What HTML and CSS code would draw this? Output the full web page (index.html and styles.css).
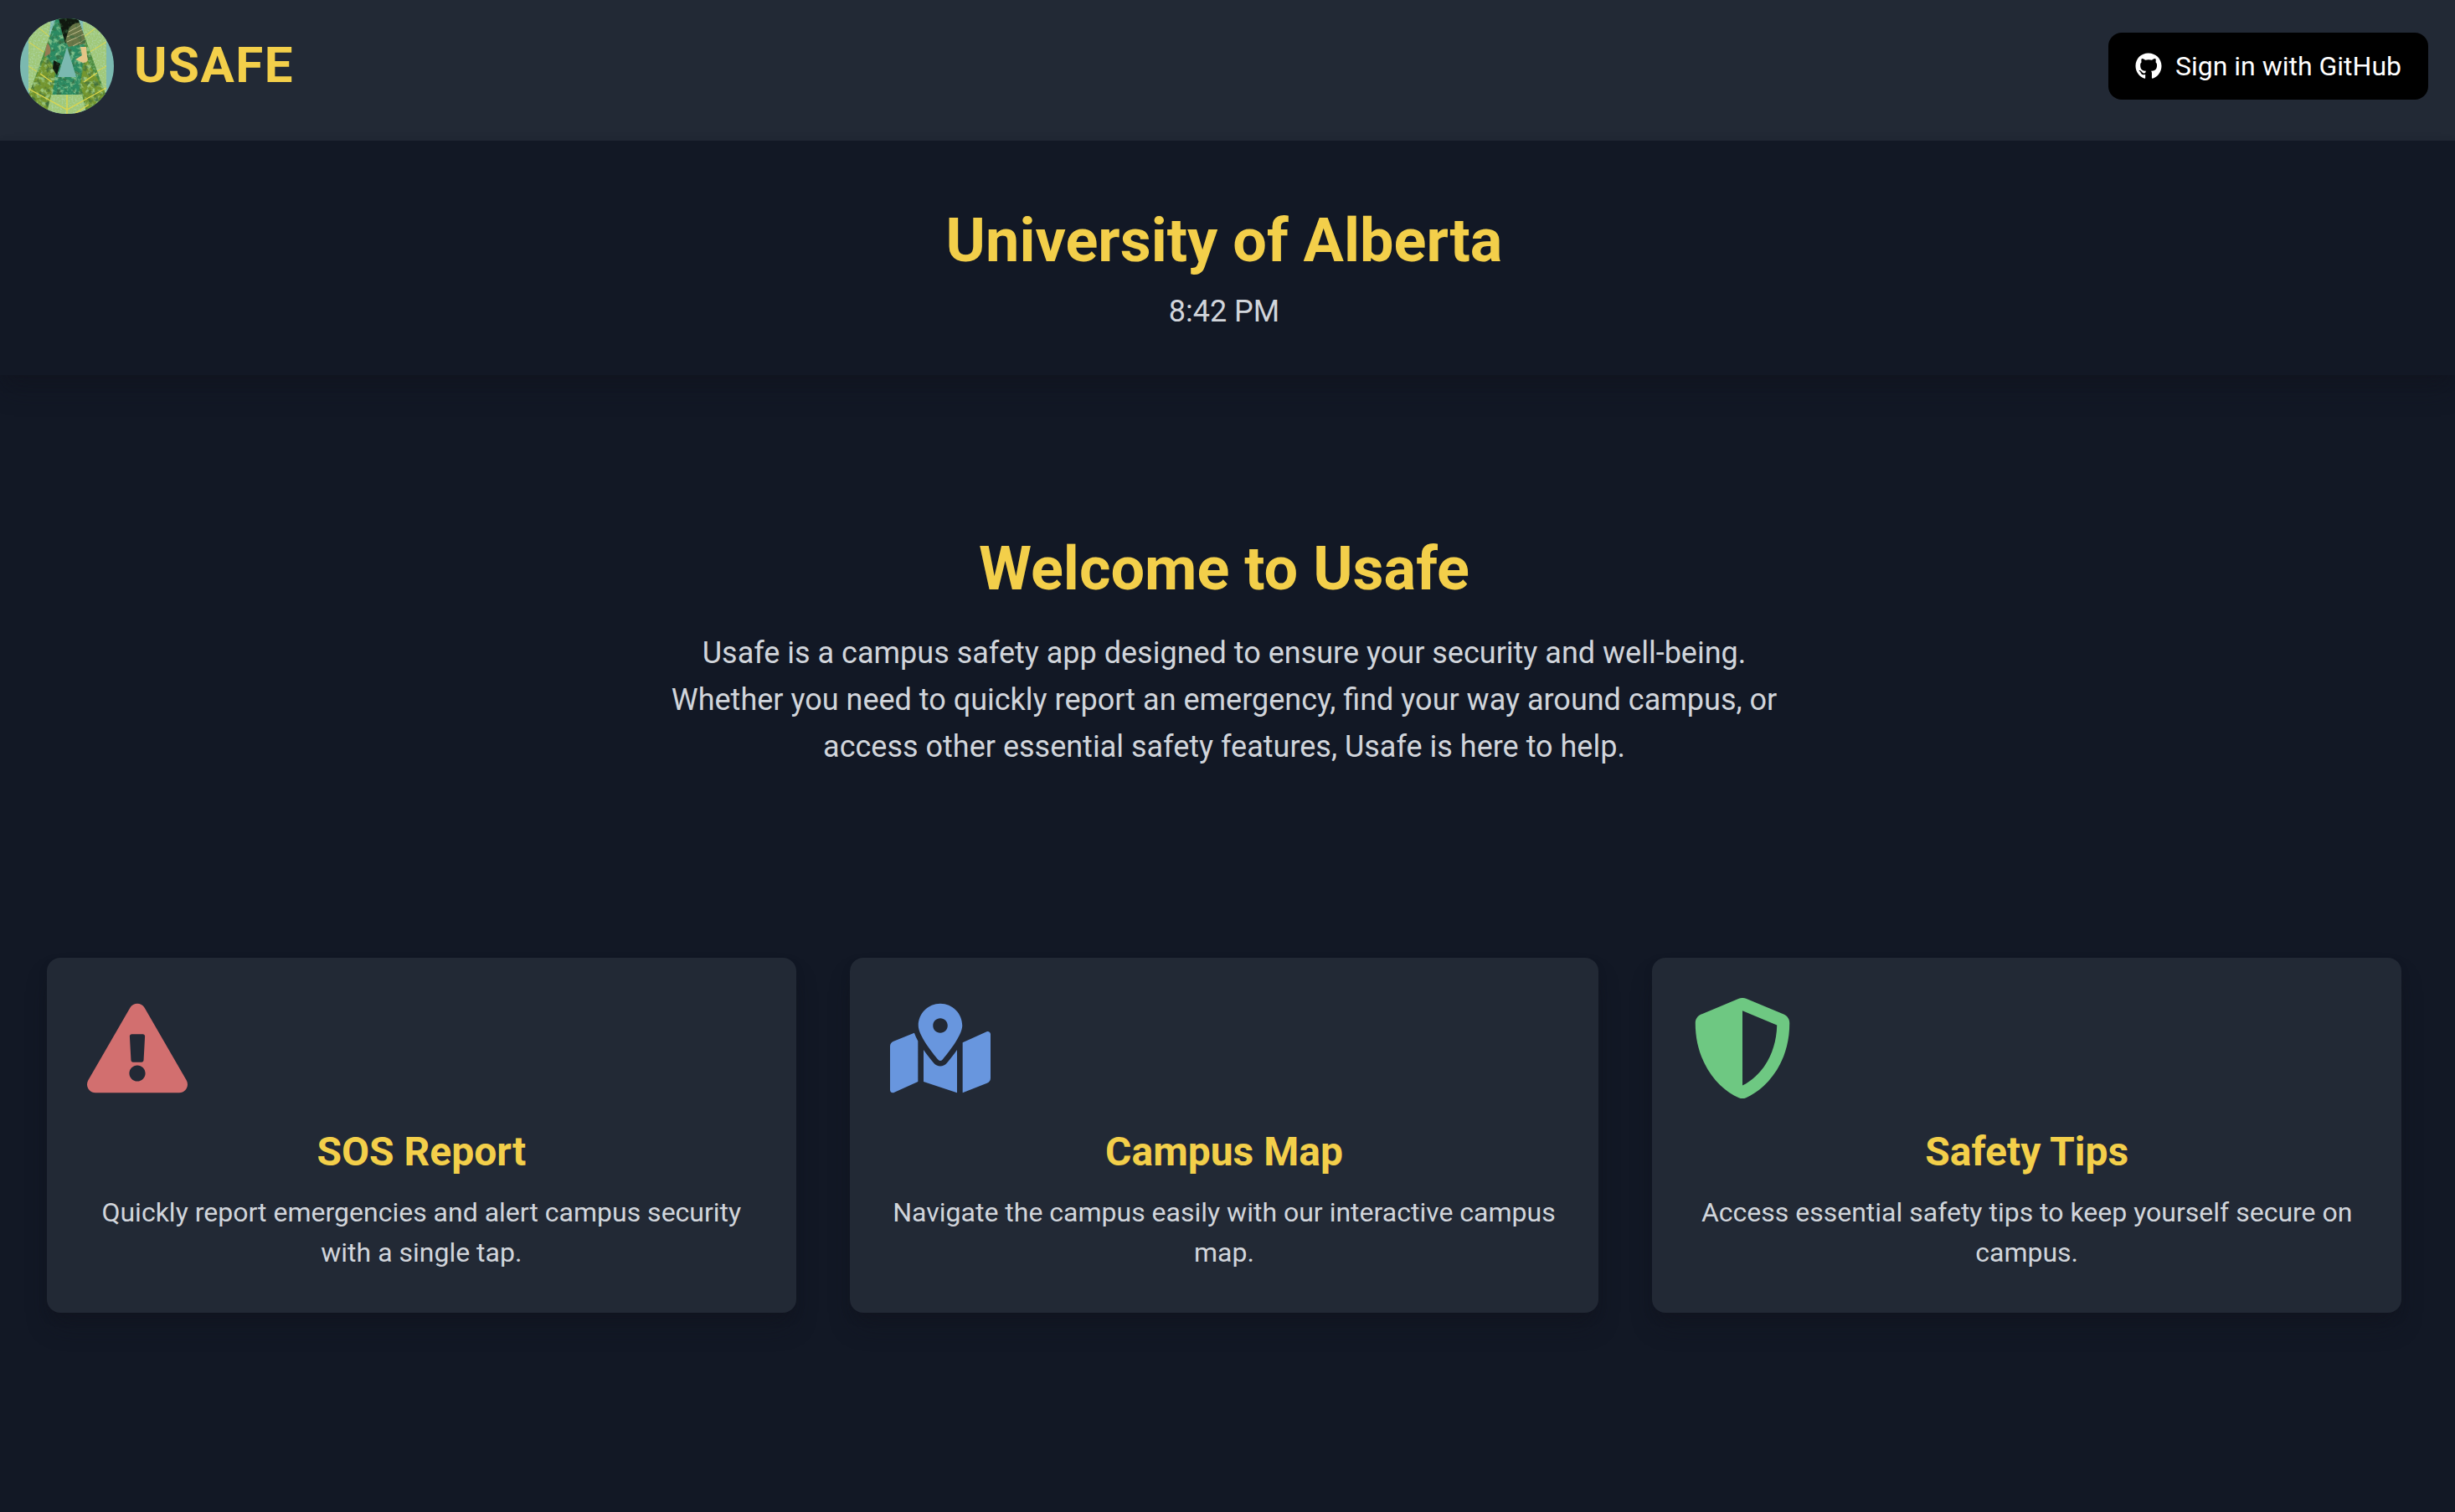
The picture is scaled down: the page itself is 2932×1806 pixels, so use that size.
FILE: index.html
```html
<!DOCTYPE html>
<html lang="en">
<head>
<meta charset="utf-8">
<title>USAFE</title>
<link rel="stylesheet" href="styles.css">
</head>
<body>
<header class="topbar">
  <div class="brand">
    <svg class="logo" viewBox="0 0 112 114" preserveAspectRatio="none" aria-hidden="true">
      <defs>
        <clipPath id="disc"><ellipse cx="56" cy="57" rx="56" ry="57"/></clipPath>
        <clipPath id="letter"><path d="M43 0H69L103 93L79 112L74 91H37L32 112L10 93ZM56 35L45 70H67Z" clip-rule="evenodd"/></clipPath>
        <filter id="moss" x="0" y="0" width="100%" height="100%">
          <feTurbulence type="fractalNoise" baseFrequency=".16" numOctaves="4" seed="8"/>
          <feColorMatrix values="0 0 0 0 .04  0 0 0 0 .14  0 0 0 0 .05  3.6 0 0 0 -1.9"/>
        </filter>
        <filter id="leafy" x="0" y="0" width="100%" height="100%">
          <feTurbulence type="fractalNoise" baseFrequency=".2" numOctaves="3" seed="21"/>
          <feColorMatrix values="0 0 0 0 .42  0 0 0 0 .72  0 0 0 0 .36  0 4 0 0 -1.9"/>
        </filter>
        <filter id="grain" x="0" y="0" width="100%" height="100%">
          <feTurbulence type="fractalNoise" baseFrequency=".5" numOctaves="2" seed="3"/>
          <feColorMatrix values="0 0 0 0 .48  0 0 0 0 .74  0 0 0 0 .6  0 3 0 0 -1.3"/>
        </filter>
      </defs>
      <g clip-path="url(#disc)">
        <rect width="112" height="114" fill="#7bb9b0"/>
        <path d="M10 0H37L32 40L12 88H10ZM75 0H103V88H98L76 34ZM30 91H80V114H30Z" fill="#a0c878"/>
        <path d="M10 0H37L32 40L12 88H10ZM75 0H103V88H98L76 34ZM30 91H80V114H30Z" filter="url(#grain)" opacity=".5"/>
        <path d="M22 11L38 24M10 28L34 44M10 57L24 66M91 11L75 23M103 28L80 42M103 57L92 63" stroke="#dfd64a" fill="none"/>
        <g clip-path="url(#letter)">
          <rect width="112" height="114" fill="#4c8c40"/>
          <path d="M40 0H72L77 34L70 92H38L44 60L32 46Z" fill="#2b8a62"/>
          <path d="M8 93L30 46L42 60L36 114ZM78 46L104 93L80 114L72 78Z" fill="#74962f"/>
          <rect width="112" height="114" filter="url(#leafy)" opacity=".65"/>
          <path d="M46 0H72V10L62 18L54 30L50 16ZM40 50L48 54L44 68L39 60Z" fill="#10180f"/>
          <path d="M58 13Q64 3 74 6L78 30L58 34L54 27Z" fill="#697647"/>
          <path d="M58 16L73 8M56 22L75 13M56 28L76 19M63 33L78 25" stroke="#bdbb8b" stroke-width="1"/>
          <rect width="112" height="114" filter="url(#moss)" opacity=".85"/>
          <path d="M32 29Q38 34 36 42L29 46Z" fill="#967b53"/>
          <path d="M72 34H79L80 45Q83 53 75 53L66 49L74 44Z" fill="#e4c587"/>
        </g>
        <path d="M56 34L45 70H67Z" fill="#7bb9b0"/>
        <path d="M10 84L56 109L103 83M56 91V114M65 114L82 103M76 76L92 65M24 66L38 76" stroke="#dfd64a" stroke-width="1.4" fill="none"/>
      </g>
    </svg>
    <span class="brand-name">USAFE</span>
  </div>
  <button class="signin">
    <svg class="signin-icon" viewBox="0 0 496 512" aria-hidden="true"><path fill="currentColor" d="M165.9 397.4c0 2-2.3 3.6-5.2 3.6-3.3.3-5.6-1.3-5.6-3.6 0-2 2.3-3.6 5.2-3.6 3-.3 5.6 1.3 5.6 3.6zM244.8 8C106.1 8 0 113.3 0 252c0 110.9 69.8 205.8 169.5 239.2 12.8 2.3 17.3-5.6 17.3-12.1 0-6.2-.3-40.4-.3-61.4 0 0-70 15-84.7-29.8 0 0-11.4-29.1-27.8-36.6 0 0-22.9-15.7 1.6-15.4 0 0 24.9 2 38.6 25.8 21.9 38.6 58.6 27.5 72.9 20.9 2.3-16 8.8-27.1 16-33.7-55.9-6.2-112.3-14.3-112.3-110.5 0-27.5 7.6-41.3 23.6-58.9-2.6-6.5-11.1-33.3 2.6-67.9 20.9-6.5 69 27 69 27 20-5.6 41.5-8.5 62.8-8.5s42.8 2.9 62.8 8.5c0 0 48.1-33.6 69-27 13.7 34.7 5.2 61.4 2.6 67.9 16 17.7 25.8 31.5 25.8 58.9 0 96.5-58.9 104.2-114.8 110.5 9.2 7.9 17 22.9 17 46.4 0 33.7-.3 75.4-.3 83.6 0 6.5 4.6 14.4 17.3 12.1C428.2 457.8 496 362.9 496 252 496 113.3 383.5 8 244.8 8z"/></svg>
    <span>Sign in with GitHub</span>
  </button>
</header>
<section class="campus">
  <h1 class="heading">University of Alberta</h1>
  <p class="clock">8:42 PM</p>
</section>
<main class="content">
  <section class="welcome">
    <h2 class="heading">Welcome to Usafe</h2>
    <p class="intro">Usafe is a campus safety app designed to ensure your security and well-being. Whether you need to quickly report an emergency, find your way around campus, or access other essential safety features, Usafe is here to help.</p>
  </section>
  <section class="cards">
    <article class="card">
      <svg class="card-icon red" viewBox="0 0 576 512" aria-hidden="true"><path fill="currentColor" d="M569.517 440.013C587.975 472.007 564.806 512 527.94 512H48.054c-36.937 0-59.999-40.055-41.577-71.987L246.423 23.985c18.467-32.009 64.72-31.951 83.154 0l239.94 416.028zM288 354c-25.405 0-46 20.595-46 46s20.595 46 46 46 46-20.595 46-46-20.595-46-46-46zm-43.673-165.346l7.418 136c.347 6.364 5.609 11.346 11.982 11.346h48.546c6.373 0 11.635-4.982 11.982-11.346l7.418-136c.375-6.874-5.098-12.654-11.982-12.654h-63.383c-6.884 0-12.356 5.78-11.981 12.654z"/></svg>
      <h3 class="card-title">SOS Report</h3>
      <p class="card-text">Quickly report emergencies and alert campus security with a single tap.</p>
    </article>
    <article class="card">
      <svg class="card-icon blue" viewBox="0 0 576 512" aria-hidden="true"><path fill="currentColor" d="M288 0c-69.59 0-126 56.41-126 126 0 56.26 82.35 158.8 113.9 196.02 6.39 7.54 17.82 7.54 24.2 0C331.65 284.8 414 182.26 414 126 414 56.41 357.59 0 288 0zm0 168c-23.2 0-42-18.8-42-42s18.8-42 42-42 42 18.8 42 42-18.8 42-42 42zM20.12 215.95A32.006 32.006 0 0 0 0 245.66v250.32c0 11.32 11.43 19.06 21.94 14.86L160 448V214.92c-8.84-15.98-16.07-31.54-21.25-46.42L20.12 215.95zM288 359.67c-14.07 0-27.38-6.18-36.51-16.96-19.66-23.2-40.57-49.62-59.49-76.72v182l192 64V266c-18.92 27.09-39.82 53.52-59.49 76.72-9.13 10.77-22.44 16.95-36.51 16.95zm266.06-198.51L416 224v288l139.88-55.95A31.996 31.996 0 0 0 576 426.34V176.02c0-11.32-11.43-19.06-21.94-14.86z"/></svg>
      <h3 class="card-title">Campus Map</h3>
      <p class="card-text">Navigate the campus easily with our interactive campus map.</p>
    </article>
    <article class="card">
      <svg class="card-icon green" viewBox="0 0 512 512" aria-hidden="true"><path fill="currentColor" d="M466.5 83.7l-192-80a48.15 48.15 0 0 0-36.9 0l-192 80C27.7 91.1 16 108.6 16 128c0 198.5 114.5 335.7 221.5 380.3 11.8 4.9 25.1 4.9 36.9 0C360.1 472.6 496 349.3 496 128c0-19.4-11.7-36.9-29.5-44.3zM256.1 446.3l-.1-381 175.9 73.3c-3.3 151.4-82.1 261.1-175.8 307.7z"/></svg>
      <h3 class="card-title">Safety Tips</h3>
      <p class="card-text">Access essential safety tips to keep yourself secure on campus.</p>
    </article>
  </section>
</main>
</body>
</html>
```
FILE: styles.css
```css
* { box-sizing: border-box; margin: 0; }
body {
  min-height: 1806px;
  background: #121825;
  color: #d1d5db;
  font-family: Roboto, sans-serif;
  font-size: 32px;
  line-height: 48px;
}
.topbar {
  display: flex;
  justify-content: space-between;
  align-items: flex-start;
  height: 168px;
  padding: 22px 32px 0 24px;
  background: #222935;
}
.brand { display: flex; align-items: center; gap: 24px; }
.logo { display: block; width: 112px; height: 114px; }
.brand-name {
  padding-bottom: 2px;
  color: #f3cf4a;
  font-size: 60px;
  line-height: 72px;
  font-weight: 700;
  letter-spacing: 1.5px;
}
.signin {
  display: flex;
  align-items: center;
  gap: 16px;
  height: 80px;
  margin-top: 17px;
  padding: 0 32px;
  border: 0;
  border-radius: 16px;
  background: #000;
  color: #fff;
  font: 400 32px/48px Roboto, sans-serif;
}
.signin-icon { width: 32px; height: 32px; }
.campus {
  height: 280px;
  padding: 80px 8px 0 0;
  text-align: center;
  box-shadow: 0 20px 30px -6px rgba(18, 20, 30, .4), 0 8px 12px -4px rgba(18, 20, 30, .5);
}
.heading { color: #f3cf4a; font-size: 72px; line-height: 80px; font-weight: 700; }
.clock { margin-top: 16px; font-size: 36px; line-height: 56px; }
.content { padding: 192px 64px 0 56px; }
.welcome { text-align: center; }
.intro { width: 1344px; margin: 32px auto 0; font-size: 36px; line-height: 56px; }
.cards {
  display: grid;
  grid-template-columns: repeat(3, 1fr);
  gap: 64px;
  margin-top: 224px;
}
.card {
  height: 424px;
  padding: 48px;
  border-radius: 16px;
  background: #222935;
  box-shadow: 0 20px 30px -6px rgba(18, 20, 30, .4), 0 8px 12px -4px rgba(18, 20, 30, .5);
  text-align: center;
}
.card-icon { display: block; width: 120px; height: 120px; }
.red { color: #d26f6f; }
.blue { color: #6896de; }
.green { color: #6ec882; }
.card-title { margin-top: 32px; color: #f3cf4a; font-size: 48px; line-height: 64px; font-weight: 700; }
.card-text { margin-top: 16px; }
```
